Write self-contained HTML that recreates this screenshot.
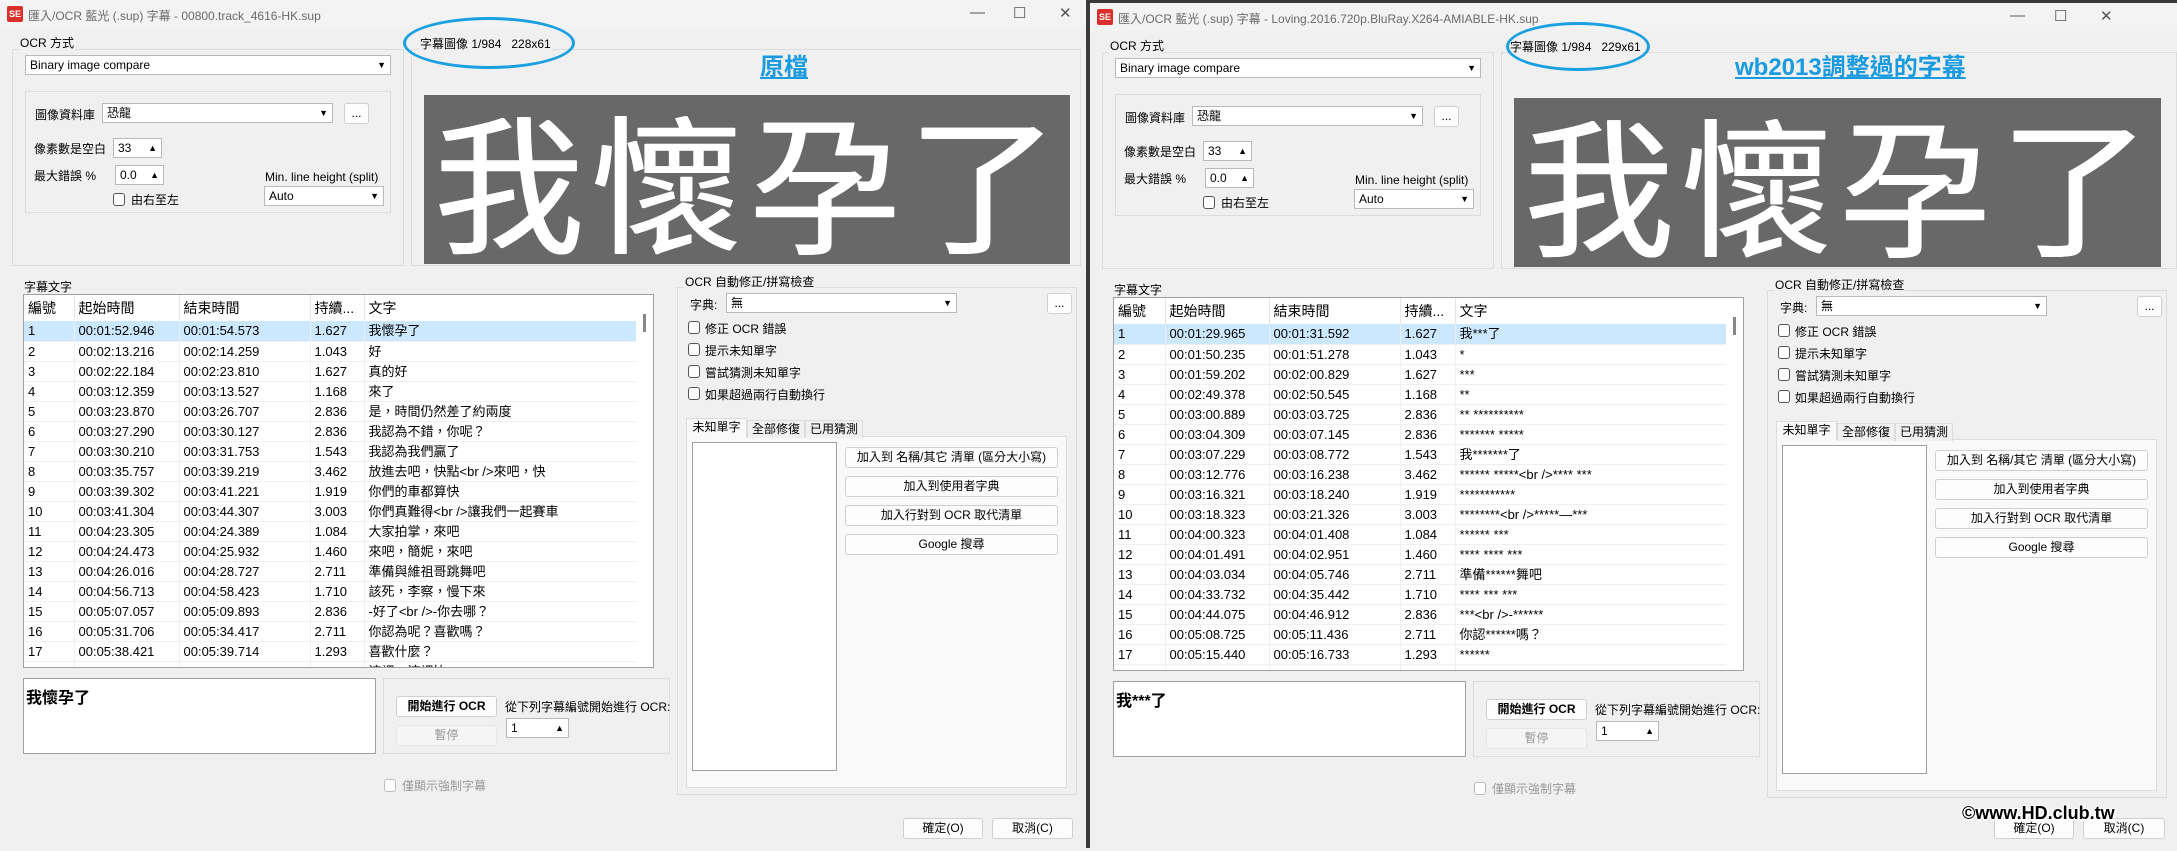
<!DOCTYPE html>
<html><head><meta charset="utf-8">
<style>
*{box-sizing:border-box;margin:0;padding:0}
body{width:2177px;height:848px;overflow:hidden;background:#f0f0f0;font-family:"Liberation Sans","Noto Sans CJK TC",sans-serif;font-size:12px;color:#000;position:relative}
.win{position:absolute;top:0;width:1087px;height:848px;background:#f0f0f0;overflow:hidden}
.a{position:absolute}
.tb{position:absolute;left:0;top:0;right:0;height:28px;background:#f3f3f3}
.ico{position:absolute;left:7px;top:6px;width:16px;height:16px;background:#d9302c;border-radius:2px;color:#fff;font-size:9px;font-weight:bold;text-align:center;line-height:16px}
.ttl{position:absolute;left:28px;top:7px;color:#6a6a6a;font-size:12px;white-space:nowrap}
.ctl{position:absolute;top:4px;color:#555;font-size:15px}
.grp{position:absolute;border:1px solid #dcdcdc}
.lbl{position:absolute;background:#f0f0f0;padding:0 1px;white-space:nowrap;font-size:12px}
.cb{position:absolute;background:#fff;border:1px solid #b9b9b9;height:20px;line-height:18px;padding-left:4px;font-size:12px;white-space:nowrap}
.cb .ar{position:absolute;right:4px;top:0;font-size:9px}
.btn{position:absolute;background:#fdfdfd;border:1px solid #d0d0d0;border-radius:3px;text-align:center;font-size:12px;line-height:18px;height:21px;white-space:nowrap}
.chk{position:absolute;width:12px;height:13px;border:1px solid #555;border-radius:3px;background:#fff}
.t{position:absolute;white-space:nowrap;font-size:12px}
.ell{position:absolute;border:3.5px solid #1aa0e0;border-radius:50%}
.head{position:absolute;color:#1a9be0;font-weight:bold;font-size:24px;text-decoration:underline;white-space:nowrap}
.img{position:absolute;background:#686868;overflow:hidden}
.img span{position:absolute;top:-2px;color:#fff;font-size:150px;font-weight:normal;line-height:170px;font-family:"WenQuanYi Zen Hei","Noto Sans CJK TC",sans-serif;text-shadow:1px 0 0 #fff,-1px 0 0 #fff}
.list{position:absolute;left:23px;top:294px;width:631px;height:374px;background:#fff;border:1px solid #a0a0a0;overflow:hidden}
table{border-collapse:collapse;table-layout:fixed;font-size:13px}
td{height:20px;border-bottom:1px solid #f0f0f0;border-right:1px solid #f0f0f0;padding-left:4px;white-space:nowrap;overflow:hidden;line-height:19px}
tr.h td{height:26px;border-right:1px solid #e5e5e5;font-size:14px;border-bottom:none}
tr.s td{background:#cce8ff}
.sb{position:absolute;right:0;top:0;width:17px;height:100%;background:#fff}
.sb div{position:absolute;left:7px;top:19px;width:3px;height:18px;background:#888}
.tabp{position:absolute;background:#f9f9f9;border:1px solid #dcdcdc}
.tab{position:absolute;border:1px solid #dcdcdc;border-bottom:none;height:18px;line-height:17px;text-align:center;font-size:12px;background:#f0f0f0}
.wm{position:absolute;font-weight:bold;font-size:18px;color:#000;text-shadow:-1px -1px 0 #fff,1px -1px 0 #fff,-1px 1px 0 #fff,1px 1px 0 #fff,0 2px 0 #fff,2px 0 0 #fff;white-space:nowrap}
</style></head><body>

<!-- LEFT WINDOW -->
<div class="win" style="left:0">
<div class="tb"><div class="ico">SE</div><div class="ttl">匯入/OCR 藍光 (.sup) 字幕 - 00800.track_4616-HK.sup</div>
<div class="ctl" style="left:970px">—</div><div class="ctl" style="left:1013px">☐</div><div class="ctl" style="left:1059px">✕</div></div>

<div class="grp" style="left:12px;top:49px;width:392px;height:217px"></div>
<div class="lbl" style="left:19px;top:34px">OCR 方式</div>
<div class="cb" style="left:25px;top:55px;width:366px">Binary image compare<span class="ar">▼</span></div>
<div class="grp" style="left:25px;top:91px;width:366px;height:122px"></div>
<div class="t" style="left:35px;top:106px">圖像資料庫</div>
<div class="cb" style="left:102px;top:103px;width:231px">恐龍<span class="ar">▼</span></div>
<div class="btn" style="left:344px;top:103px;width:25px">...</div>
<div class="t" style="left:34px;top:140px">像素數是空白</div>
<div class="cb" style="left:113px;top:138px;width:49px">33<span class="ar">▲</span></div>
<div class="t" style="left:34px;top:167px">最大錯誤 %</div>
<div class="cb" style="left:115px;top:165px;width:49px">0.0<span class="ar">▲</span></div>
<div class="chk" style="left:113px;top:193px"></div><div class="t" style="left:131px;top:191px">由右至左</div>
<div class="t" style="left:265px;top:170px">Min. line height (split)</div>
<div class="cb" style="left:264px;top:186px;width:120px">Auto<span class="ar">▼</span></div>

<div class="grp" style="left:411px;top:49px;width:670px;height:217px"></div>
<div class="lbl" style="left:419px;top:35px">字幕圖像 1/984&nbsp;&nbsp; 228x61</div>
<div class="ell" style="left:403px;top:17px;width:172px;height:52px"></div>
<div class="head" style="left:760px;top:47px">原檔</div>
<div class="img" style="left:424px;top:95px;width:646px;height:169px">
<span style="left:10px">我</span><span style="left:168px">懷</span><span style="left:326px">孕</span><span style="left:484px">了</span></div>

<div class="t" style="left:24px;top:278px">字幕文字</div>
<div class="list"><table>
<colgroup><col style="width:50px"><col style="width:105px"><col style="width:131px"><col style="width:54px"><col style="width:272px"></colgroup>
<tr class="h"><td>編號</td><td>起始時間</td><td>結束時間</td><td>持續...</td><td>文字</td></tr>
<tr class="s"><td>1</td><td>00:01:52.946</td><td>00:01:54.573</td><td>1.627</td><td>我懷孕了</td></tr>
<tr><td>2</td><td>00:02:13.216</td><td>00:02:14.259</td><td>1.043</td><td>好</td></tr>
<tr><td>3</td><td>00:02:22.184</td><td>00:02:23.810</td><td>1.627</td><td>真的好</td></tr>
<tr><td>4</td><td>00:03:12.359</td><td>00:03:13.527</td><td>1.168</td><td>來了</td></tr>
<tr><td>5</td><td>00:03:23.870</td><td>00:03:26.707</td><td>2.836</td><td>是，時間仍然差了約兩度</td></tr>
<tr><td>6</td><td>00:03:27.290</td><td>00:03:30.127</td><td>2.836</td><td>我認為不錯，你呢？</td></tr>
<tr><td>7</td><td>00:03:30.210</td><td>00:03:31.753</td><td>1.543</td><td>我認為我們贏了</td></tr>
<tr><td>8</td><td>00:03:35.757</td><td>00:03:39.219</td><td>3.462</td><td>放進去吧，快點&lt;br /&gt;來吧，快</td></tr>
<tr><td>9</td><td>00:03:39.302</td><td>00:03:41.221</td><td>1.919</td><td>你們的車都算快</td></tr>
<tr><td>10</td><td>00:03:41.304</td><td>00:03:44.307</td><td>3.003</td><td>你們真難得&lt;br /&gt;讓我們一起賽車</td></tr>
<tr><td>11</td><td>00:04:23.305</td><td>00:04:24.389</td><td>1.084</td><td>大家拍掌，來吧</td></tr>
<tr><td>12</td><td>00:04:24.473</td><td>00:04:25.932</td><td>1.460</td><td>來吧，簡妮，來吧</td></tr>
<tr><td>13</td><td>00:04:26.016</td><td>00:04:28.727</td><td>2.711</td><td>準備與維祖哥跳舞吧</td></tr>
<tr><td>14</td><td>00:04:56.713</td><td>00:04:58.423</td><td>1.710</td><td>該死，李察，慢下來</td></tr>
<tr><td>15</td><td>00:05:07.057</td><td>00:05:09.893</td><td>2.836</td><td>-好了&lt;br /&gt;-你去哪？</td></tr>
<tr><td>16</td><td>00:05:31.706</td><td>00:05:34.417</td><td>2.711</td><td>你認為呢？喜歡嗎？</td></tr>
<tr><td>17</td><td>00:05:38.421</td><td>00:05:39.714</td><td>1.293</td><td>喜歡什麼？</td></tr>
<tr><td>18</td><td>00:05:39.800</td><td>00:05:41.000</td><td>1.200</td><td>這裡，這裡比</td></tr>
</table><div class="sb"><div></div></div></div>

<div class="a" style="left:23px;top:678px;width:353px;height:76px;background:#fff;border:1px solid #a0a0a0"><div class="t" style="left:2px;top:5px;font-size:16px;font-weight:bold">我懷孕了</div></div>
<div class="grp" style="left:383px;top:678px;width:287px;height:76px"></div>
<div class="btn" style="left:396px;top:696px;width:101px;font-weight:bold">開始進行 OCR</div>
<div class="btn" style="left:396px;top:725px;width:101px;color:#999;background:#f5f5f5;border-color:#e5e5e5">暫停</div>
<div class="t" style="left:505px;top:698px">從下列字幕編號開始進行 OCR:</div>
<div class="cb" style="left:506px;top:718px;width:63px">1<span class="ar">▲</span></div>
<div class="chk" style="left:384px;top:779px;border-color:#bbb"></div><div class="t" style="left:402px;top:777px;color:#999">僅顯示強制字幕</div>

<div class="grp" style="left:677px;top:287px;width:400px;height:508px"></div>
<div class="lbl" style="left:684px;top:273px">OCR 自動修正/拼寫檢查</div>
<div class="t" style="left:690px;top:296px">字典:</div>
<div class="cb" style="left:726px;top:293px;width:231px">無<span class="ar">▼</span></div>
<div class="btn" style="left:1047px;top:293px;width:25px">...</div>
<div class="chk" style="left:688px;top:321px"></div><div class="t" style="left:705px;top:320px">修正 OCR 錯誤</div>
<div class="chk" style="left:688px;top:343px"></div><div class="t" style="left:705px;top:342px">提示未知單字</div>
<div class="chk" style="left:688px;top:365px"></div><div class="t" style="left:705px;top:364px">嘗試猜測未知單字</div>
<div class="chk" style="left:688px;top:387px"></div><div class="t" style="left:705px;top:386px">如果超過兩行自動換行</div>
<div class="tabp" style="left:686px;top:436px;width:381px;height:352px"></div>
<div class="tab" style="left:686px;top:418px;width:61px;background:#f9f9f9;height:19px">未知單字</div>
<div class="tab" style="left:747px;top:420px;width:58px">全部修復</div>
<div class="tab" style="left:805px;top:420px;width:58px">已用猜測</div>
<div class="a" style="left:692px;top:442px;width:145px;height:329px;background:#fff;border:1px solid #a0a0a0"></div>
<div class="btn" style="left:845px;top:447px;width:213px">加入到 名稱/其它 清單 (區分大小寫)</div>
<div class="btn" style="left:845px;top:476px;width:213px">加入到使用者字典</div>
<div class="btn" style="left:845px;top:505px;width:213px">加入行對到 OCR 取代清單</div>
<div class="btn" style="left:845px;top:534px;width:213px">Google 搜尋</div>
<div class="btn" style="left:903px;top:818px;width:80px">確定(O)</div>
<div class="btn" style="left:992px;top:818px;width:81px">取消(C)</div>
</div>

<!-- divider -->
<div class="a" style="left:1086px;top:0;width:4px;height:848px;background:#3a3a3a"></div>
<div class="a" style="left:1086px;top:0;width:1091px;height:3px;background:#3a3a3a"></div>

<!-- RIGHT WINDOW -->
<div class="win" style="left:1090px;top:3px">
<div class="tb"><div class="ico">SE</div><div class="ttl">匯入/OCR 藍光 (.sup) 字幕 - Loving.2016.720p.BluRay.X264-AMIABLE-HK.sup</div>
<div class="ctl" style="left:920px">—</div><div class="ctl" style="left:964px">☐</div><div class="ctl" style="left:1010px">✕</div></div>

<div class="grp" style="left:12px;top:49px;width:392px;height:217px"></div>
<div class="lbl" style="left:19px;top:34px">OCR 方式</div>
<div class="cb" style="left:25px;top:55px;width:366px">Binary image compare<span class="ar">▼</span></div>
<div class="grp" style="left:25px;top:91px;width:366px;height:122px"></div>
<div class="t" style="left:35px;top:106px">圖像資料庫</div>
<div class="cb" style="left:102px;top:103px;width:231px">恐龍<span class="ar">▼</span></div>
<div class="btn" style="left:344px;top:103px;width:25px">...</div>
<div class="t" style="left:34px;top:140px">像素數是空白</div>
<div class="cb" style="left:113px;top:138px;width:49px">33<span class="ar">▲</span></div>
<div class="t" style="left:34px;top:167px">最大錯誤 %</div>
<div class="cb" style="left:115px;top:165px;width:49px">0.0<span class="ar">▲</span></div>
<div class="chk" style="left:113px;top:193px"></div><div class="t" style="left:131px;top:191px">由右至左</div>
<div class="t" style="left:265px;top:170px">Min. line height (split)</div>
<div class="cb" style="left:264px;top:186px;width:120px">Auto<span class="ar">▼</span></div>

<div class="grp" style="left:411px;top:49px;width:676px;height:217px"></div>
<div class="lbl" style="left:419px;top:35px">字幕圖像 1/984&nbsp;&nbsp; 229x61</div>
<div class="ell" style="left:416px;top:19px;width:144px;height:49px"></div>
<div class="head" style="left:645px;top:44px">wb2013調整過的字幕</div>
<div class="img" style="left:424px;top:95px;width:647px;height:169px">
<span style="left:10px">我</span><span style="left:168px">懷</span><span style="left:326px">孕</span><span style="left:486px">了</span></div>

<div class="t" style="left:24px;top:278px">字幕文字</div>
<div class="list"><table>
<colgroup><col style="width:51px"><col style="width:104px"><col style="width:131px"><col style="width:55px"><col style="width:271px"></colgroup>
<tr class="h"><td>編號</td><td>起始時間</td><td>結束時間</td><td>持續...</td><td>文字</td></tr>
<tr class="s"><td>1</td><td>00:01:29.965</td><td>00:01:31.592</td><td>1.627</td><td>我***了</td></tr>
<tr><td>2</td><td>00:01:50.235</td><td>00:01:51.278</td><td>1.043</td><td>*</td></tr>
<tr><td>3</td><td>00:01:59.202</td><td>00:02:00.829</td><td>1.627</td><td>***</td></tr>
<tr><td>4</td><td>00:02:49.378</td><td>00:02:50.545</td><td>1.168</td><td>**</td></tr>
<tr><td>5</td><td>00:03:00.889</td><td>00:03:03.725</td><td>2.836</td><td>** **********</td></tr>
<tr><td>6</td><td>00:03:04.309</td><td>00:03:07.145</td><td>2.836</td><td>******* *****</td></tr>
<tr><td>7</td><td>00:03:07.229</td><td>00:03:08.772</td><td>1.543</td><td>我*******了</td></tr>
<tr><td>8</td><td>00:03:12.776</td><td>00:03:16.238</td><td>3.462</td><td>****** *****&lt;br /&gt;**** ***</td></tr>
<tr><td>9</td><td>00:03:16.321</td><td>00:03:18.240</td><td>1.919</td><td>***********</td></tr>
<tr><td>10</td><td>00:03:18.323</td><td>00:03:21.326</td><td>3.003</td><td>********&lt;br /&gt;*****—***</td></tr>
<tr><td>11</td><td>00:04:00.323</td><td>00:04:01.408</td><td>1.084</td><td>****** ***</td></tr>
<tr><td>12</td><td>00:04:01.491</td><td>00:04:02.951</td><td>1.460</td><td>**** **** ***</td></tr>
<tr><td>13</td><td>00:04:03.034</td><td>00:04:05.746</td><td>2.711</td><td>準備******舞吧</td></tr>
<tr><td>14</td><td>00:04:33.732</td><td>00:04:35.442</td><td>1.710</td><td>**** *** ***</td></tr>
<tr><td>15</td><td>00:04:44.075</td><td>00:04:46.912</td><td>2.836</td><td>***&lt;br /&gt;-******</td></tr>
<tr><td>16</td><td>00:05:08.725</td><td>00:05:11.436</td><td>2.711</td><td>你認******嗎？</td></tr>
<tr><td>17</td><td>00:05:15.440</td><td>00:05:16.733</td><td>1.293</td><td>******</td></tr>
<tr><td>18</td><td>00:05:17.000</td><td>00:05:18.000</td><td>1.000</td><td>***</td></tr>
</table><div class="sb"><div></div></div></div>

<div class="a" style="left:23px;top:678px;width:353px;height:76px;background:#fff;border:1px solid #a0a0a0"><div class="t" style="left:2px;top:5px;font-size:16px;font-weight:bold">我***了</div></div>
<div class="grp" style="left:383px;top:678px;width:287px;height:76px"></div>
<div class="btn" style="left:396px;top:696px;width:101px;font-weight:bold">開始進行 OCR</div>
<div class="btn" style="left:396px;top:725px;width:101px;color:#999;background:#f5f5f5;border-color:#e5e5e5">暫停</div>
<div class="t" style="left:505px;top:698px">從下列字幕編號開始進行 OCR:</div>
<div class="cb" style="left:506px;top:718px;width:63px">1<span class="ar">▲</span></div>
<div class="chk" style="left:384px;top:779px;border-color:#bbb"></div><div class="t" style="left:402px;top:777px;color:#999">僅顯示強制字幕</div>

<div class="grp" style="left:677px;top:287px;width:400px;height:508px"></div>
<div class="lbl" style="left:684px;top:273px">OCR 自動修正/拼寫檢查</div>
<div class="t" style="left:690px;top:296px">字典:</div>
<div class="cb" style="left:726px;top:293px;width:231px">無<span class="ar">▼</span></div>
<div class="btn" style="left:1047px;top:293px;width:25px">...</div>
<div class="chk" style="left:688px;top:321px"></div><div class="t" style="left:705px;top:320px">修正 OCR 錯誤</div>
<div class="chk" style="left:688px;top:343px"></div><div class="t" style="left:705px;top:342px">提示未知單字</div>
<div class="chk" style="left:688px;top:365px"></div><div class="t" style="left:705px;top:364px">嘗試猜測未知單字</div>
<div class="chk" style="left:688px;top:387px"></div><div class="t" style="left:705px;top:386px">如果超過兩行自動換行</div>
<div class="tabp" style="left:686px;top:436px;width:381px;height:352px"></div>
<div class="tab" style="left:686px;top:418px;width:61px;background:#f9f9f9;height:19px">未知單字</div>
<div class="tab" style="left:747px;top:420px;width:58px">全部修復</div>
<div class="tab" style="left:805px;top:420px;width:58px">已用猜測</div>
<div class="a" style="left:692px;top:442px;width:145px;height:329px;background:#fff;border:1px solid #a0a0a0"></div>
<div class="btn" style="left:845px;top:447px;width:213px">加入到 名稱/其它 清單 (區分大小寫)</div>
<div class="btn" style="left:845px;top:476px;width:213px">加入到使用者字典</div>
<div class="btn" style="left:845px;top:505px;width:213px">加入行對到 OCR 取代清單</div>
<div class="btn" style="left:845px;top:534px;width:213px">Google 搜尋</div>
<div class="btn" style="left:904px;top:815px;width:80px">確定(O)</div>
<div class="btn" style="left:993px;top:815px;width:82px">取消(C)</div>
</div>
<div class="wm" style="left:1962px;top:803px">©www.HD.club.tw</div>
</body></html>
